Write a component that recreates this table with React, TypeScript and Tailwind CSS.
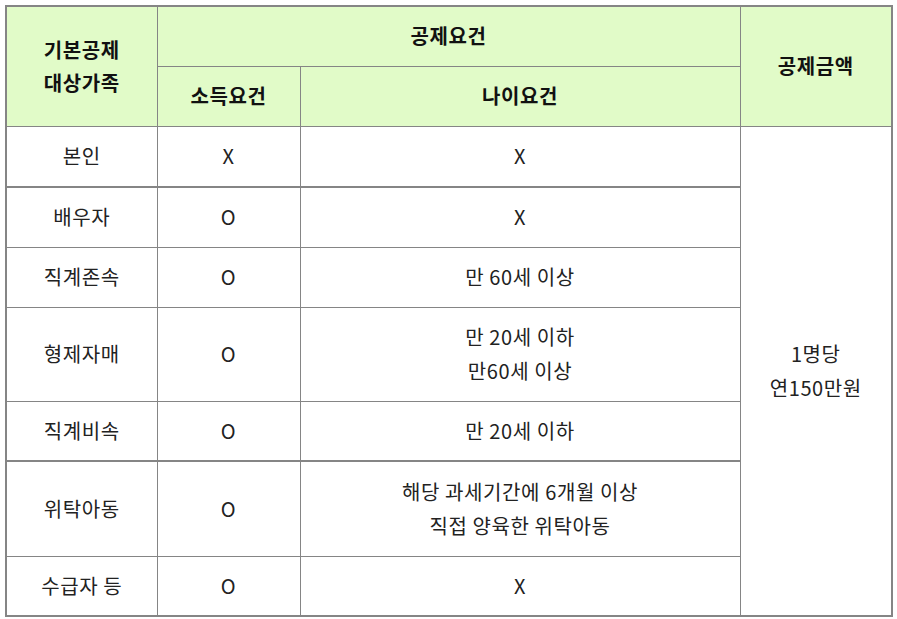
import React from "react";

const rows: { name: string; income: string; age: React.ReactNode; h: string; thickTop?: boolean }[] = [
  { name: "본인", income: "X", age: "X", h: "h-[61px]" },
  { name: "배우자", income: "O", age: "X", h: "h-[60px]", thickTop: true },
  { name: "직계존속", income: "O", age: "만 60세 이상", h: "h-[60px]" },
  {
    name: "형제자매",
    income: "O",
    age: (
      <>
        만 20세 이하
        <br />
        만60세 이상
      </>
    ),
    h: "h-[94px]",
  },
  { name: "직계비속", income: "O", age: "만 20세 이하", h: "h-[60px]" },
  {
    name: "위탁아동",
    income: "O",
    age: (
      <>
        해당 과세기간에 6개월 이상
        <br />
        직접 양육한 위탁아동
      </>
    ),
    h: "h-[95px]",
    thickTop: true,
  },
  { name: "수급자 등", income: "O", age: "X", h: "h-[60px]" },
];

export default function App() {
  return (
    <div
      className="bg-white w-[897px] h-[619px] pl-[5px] pt-[5px]"
      style={{ fontFamily: '"Noto Sans CJK KR", "Noto Sans", sans-serif' }}
    >
      <table className="border-collapse table-fixed w-[888px] border-2 border-[#858585] text-[20px] tracking-[0.6px] leading-[34px] text-[#222]">
        <colgroup>
          <col className="w-[151px]" />
          <col className="w-[143px]" />
          <col className="w-[440px]" />
          <col className="w-[152px]" />
        </colgroup>
        <thead>
          <tr className="h-[60px]">
            <th
              rowSpan={2}
              className="bg-[#e1fbc8] border border-[#858585] font-bold text-[#111] p-0 leading-[33px]"
            >
              기본공제
              <br />
              대상가족
            </th>
            <th colSpan={2} className="bg-[#e1fbc8] border border-[#858585] font-bold text-[#111] p-0">
              공제요건
            </th>
            <th rowSpan={2} className="bg-[#e1fbc8] border border-[#858585] font-bold text-[#111] p-0">
              공제금액
            </th>
          </tr>
          <tr className="h-[60px]">
            <th className="bg-[#e1fbc8] border border-[#858585] font-bold text-[#111] p-0">소득요건</th>
            <th className="bg-[#e1fbc8] border border-[#858585] font-bold text-[#111] p-0">나이요건</th>
          </tr>
        </thead>
        <tbody>
          {rows.map((r, i) => (
            <tr key={r.name} className={r.h}>
              <td
                className={`text-center border border-[#858585] p-0 font-normal ${
                  r.thickTop ? "border-t-2" : ""
                }`}
              >
                {r.name}
              </td>
              <td
                className={`text-center border border-[#858585] p-0 ${r.thickTop ? "border-t-2" : ""}`}
              >
                {r.income}
              </td>
              <td
                className={`text-center border border-[#858585] p-0 ${r.thickTop ? "border-t-2" : ""}`}
              >
                {r.age}
              </td>
              {i === 0 && (
                <td rowSpan={7} className="text-center border border-[#858585] p-0">
                  1명당
                  <br />
                  연150만원
                </td>
              )}
            </tr>
          ))}
        </tbody>
      </table>
    </div>
  );
}
